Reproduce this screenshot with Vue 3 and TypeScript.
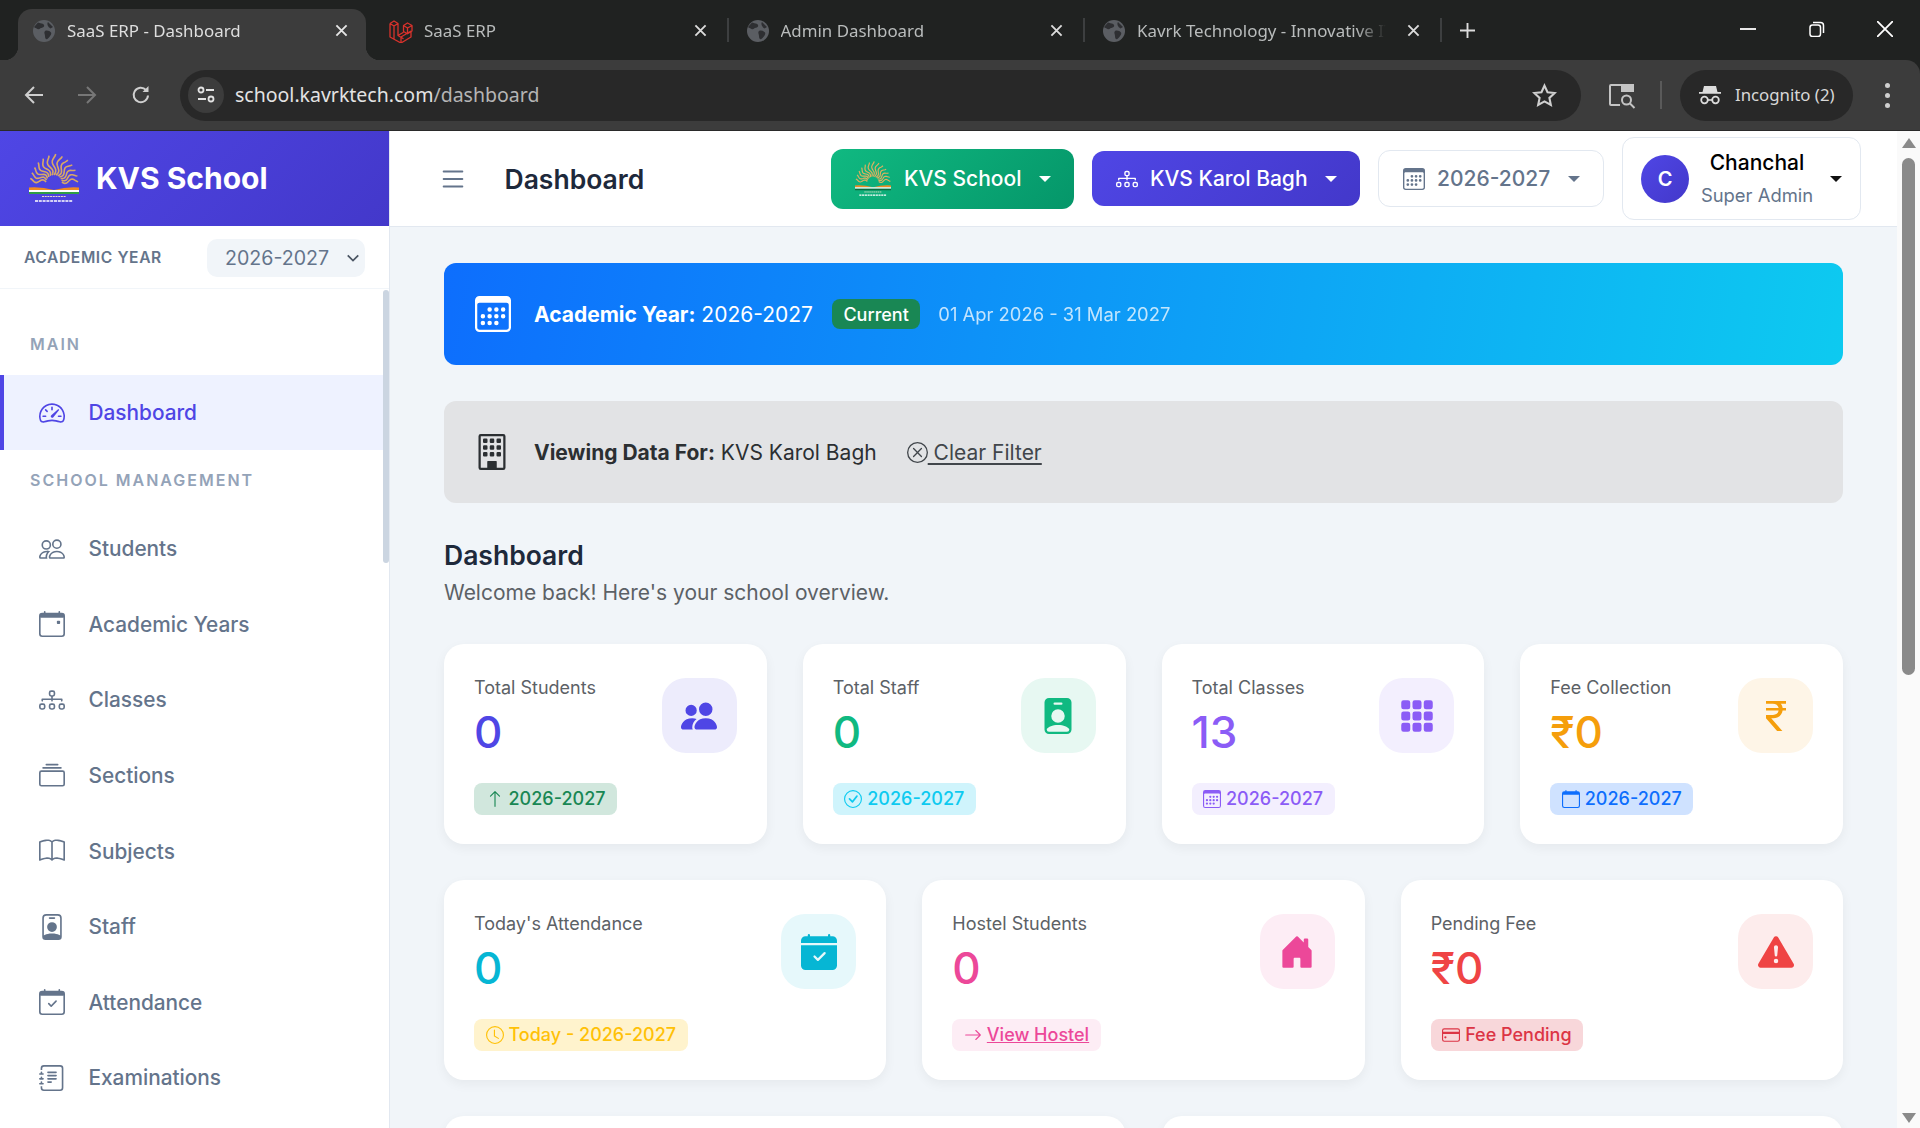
<script setup lang="ts">
import { h } from 'vue';

// bootstrap-icons paths (16x16)
const calendarOutline = 'M3.5 0a.5.5 0 0 1 .5.5V1h8V.5a.5.5 0 0 1 1 0V1h1a2 2 0 0 1 2 2v11a2 2 0 0 1-2 2H2a2 2 0 0 1-2-2V3a2 2 0 0 1 2-2h1V.5a.5.5 0 0 1 .5-.5M1 4v10a1 1 0 0 0 1 1h12a1 1 0 0 0 1-1V4z';
const icons: Record<string, string[]> = {
  speedometer: [
    'M8 4a.5.5 0 0 1 .5.5V6a.5.5 0 0 1-1 0V4.5A.5.5 0 0 1 8 4M3.732 5.732a.5.5 0 0 1 .707 0l.915.914a.5.5 0 1 1-.708.708l-.914-.915a.5.5 0 0 1 0-.707M2 10a.5.5 0 0 1 .5-.5h1.586a.5.5 0 0 1 0 1H2.5A.5.5 0 0 1 2 10m9.5 0a.5.5 0 0 1 .5-.5h1.5a.5.5 0 0 1 0 1H12a.5.5 0 0 1-.5-.5m.754-4.246a.39.39 0 0 0-.527-.02L7.547 9.31a.91.91 0 1 0 1.302 1.258l3.434-4.297a.39.39 0 0 0-.029-.518z',
    'M0 10a8 8 0 1 1 15.547 2.661c-.442 1.253-1.845 1.602-2.932 1.25C11.309 13.488 9.475 13 8 13c-1.474 0-3.31.488-4.615.911-1.087.352-2.49.003-2.932-1.25A8 8 0 0 1 0 10m8-7a7 7 0 0 0-6.603 9.329c.203.575.923.876 1.68.63C4.397 12.533 6.358 12 8 12s3.604.532 4.923.96c.757.245 1.477-.056 1.68-.631A7 7 0 0 0 8 3',
  ],
  people: ['M15 14s1 0 1-1-1-4-5-4-5 3-5 4 1 1 1 1zm-7.978-1L7 12.996c.001-.264.167-1.03.76-1.72C8.312 10.629 9.282 10 11 10c1.717 0 2.687.63 3.24 1.276.593.69.758 1.457.76 1.72l-.008.002-.014.002zM11 7a2 2 0 1 0 0-4 2 2 0 0 0 0 4m3-2a3 3 0 1 1-6 0 3 3 0 0 1 6 0M6.936 9.28a6 6 0 0 0-1.23-.247A7 7 0 0 0 5 9c-4 0-5 3-5 4q0 1 1 1h4.216A2.24 2.24 0 0 1 5 13c0-1.01.377-2.042 1.09-2.904.243-.294.526-.569.846-.816M4.92 10A5.5 5.5 0 0 0 4 13H1c0-.26.164-1.03.76-1.724.545-.636 1.492-1.256 3.16-1.275ZM1.5 5.5a3 3 0 1 1 6 0 3 3 0 0 1-6 0m3-2a2 2 0 1 0 0 4 2 2 0 0 0 0-4'],
  calendarEvent: ['M11 6.5a.5.5 0 0 1 .5-.5h1a.5.5 0 0 1 .5.5v1a.5.5 0 0 1-.5.5h-1a.5.5 0 0 1-.5-.5z', calendarOutline, 'M1 2h14v2H1z'],
  diagram: ['M6 3.5A1.5 1.5 0 0 1 7.5 2h1A1.5 1.5 0 0 1 10 3.5v1A1.5 1.5 0 0 1 8.5 6v1H14a.5.5 0 0 1 .5.5v1a.5.5 0 0 1-1 0V8h-5v.5a.5.5 0 0 1-1 0V8h-5v.5a.5.5 0 0 1-1 0v-1A.5.5 0 0 1 2 7h5.5V6A1.5 1.5 0 0 1 6 4.5zM8.5 5a.5.5 0 0 0 .5-.5v-1a.5.5 0 0 0-.5-.5h-1a.5.5 0 0 0-.5.5v1a.5.5 0 0 0 .5.5zM0 11.5A1.5 1.5 0 0 1 1.5 10h1A1.5 1.5 0 0 1 4 11.5v1A1.5 1.5 0 0 1 2.5 14h-1A1.5 1.5 0 0 1 0 12.5zm1.5-.5a.5.5 0 0 0-.5.5v1a.5.5 0 0 0 .5.5h1a.5.5 0 0 0 .5-.5v-1a.5.5 0 0 0-.5-.5zm4.5.5A1.5 1.5 0 0 1 7.5 10h1a1.5 1.5 0 0 1 1.5 1.5v1A1.5 1.5 0 0 1 8.5 14h-1A1.5 1.5 0 0 1 6 12.5zm1.5-.5a.5.5 0 0 0-.5.5v1a.5.5 0 0 0 .5.5h1a.5.5 0 0 0 .5-.5v-1a.5.5 0 0 0-.5-.5zm4.5.5a1.5 1.5 0 0 1 1.5-1.5h1a1.5 1.5 0 0 1 1.5 1.5v1a1.5 1.5 0 0 1-1.5 1.5h-1a1.5 1.5 0 0 1-1.5-1.5zm1.5-.5a.5.5 0 0 0-.5.5v1a.5.5 0 0 0 .5.5h1a.5.5 0 0 0 .5-.5v-1a.5.5 0 0 0-.5-.5z'],
  collection: ['M2.5 3.5a.5.5 0 0 1 0-1h11a.5.5 0 0 1 0 1zm2-2a.5.5 0 0 1 0-1h7a.5.5 0 0 1 0 1zM0 13a1.5 1.5 0 0 0 1.5 1.5h13A1.5 1.5 0 0 0 16 13V6a1.5 1.5 0 0 0-1.5-1.5h-13A1.5 1.5 0 0 0 0 6zm1.5.5A.5.5 0 0 1 1 13V6a.5.5 0 0 1 .5-.5h13a.5.5 0 0 1 .5.5v7a.5.5 0 0 1-.5.5z'],
  book: ['M1 2.828c.885-.37 2.154-.769 3.388-.893 1.33-.134 2.458.063 3.112.752v9.746c-.935-.53-2.12-.603-3.213-.493-1.18.12-2.37.461-3.287.811zm7.5-.141c.654-.689 1.782-.886 3.112-.752 1.234.124 2.503.523 3.388.893v9.923c-.918-.35-2.107-.692-3.287-.81-1.094-.111-2.278-.039-3.213.492zM8 1.783C7.015.936 5.587.81 4.287.94c-1.514.153-3.042.672-3.994 1.105A.5.5 0 0 0 0 2.5v11a.5.5 0 0 0 .707.455c.882-.4 2.303-.881 3.68-1.02 1.409-.142 2.59.087 3.223.877a.5.5 0 0 0 .78 0c.633-.79 1.814-1.019 3.222-.877 1.378.139 2.8.62 3.681 1.02A.5.5 0 0 0 16 13.5v-11a.5.5 0 0 0-.293-.455c-.952-.433-2.48-.952-3.994-1.105C10.413.809 8.985.936 8 1.783'],
  personBadge: ['M6.5 2a.5.5 0 0 0 0 1h3a.5.5 0 0 0 0-1zM11 8a3 3 0 1 1-6 0 3 3 0 0 1 6 0', 'M4.5 0A2.5 2.5 0 0 0 2 2.5V14a2 2 0 0 0 2 2h8a2 2 0 0 0 2-2V2.5A2.5 2.5 0 0 0 11.5 0zM3 2.5A1.5 1.5 0 0 1 4.5 1h7A1.5 1.5 0 0 1 13 2.5v10.795a4.2 4.2 0 0 0-.776-.492C11.392 12.387 10.063 12 8 12s-3.392.387-4.224.803a4.2 4.2 0 0 0-.776.492z'],
  personBadgeFill: ['M2 2a2 2 0 0 1 2-2h8a2 2 0 0 1 2 2v12a2 2 0 0 1-2 2H4a2 2 0 0 1-2-2zm4.5 0a.5.5 0 0 0 0 1h3a.5.5 0 0 0 0-1zM8 11a3 3 0 1 0 0-6 3 3 0 0 0 0 6m5 2.755C12.146 12.825 10.623 12 8 12s-4.146.826-5 1.755V14a1 1 0 0 0 1 1h8a1 1 0 0 0 1-1z'],
  calendarCheck: ['M10.854 7.146a.5.5 0 0 1 0 .708l-3 3a.5.5 0 0 1-.708 0l-1.5-1.5a.5.5 0 1 1 .708-.708L7.5 9.793l2.646-2.647a.5.5 0 0 1 .708 0', calendarOutline, 'M1 2h14v2H1z'],
  calendarCheckFill: ['M4 .5a.5.5 0 0 0-1 0V1H2a2 2 0 0 0-2 2v1h16V3a2 2 0 0 0-2-2h-1V.5a.5.5 0 0 0-1 0V1H4zM16 14V5H0v9a2 2 0 0 0 2 2h12a2 2 0 0 0 2-2m-5.146-5.146-3 3a.5.5 0 0 1-.708 0l-1.5-1.5a.5.5 0 0 1 .708-.708L7.5 10.793l2.646-2.647a.5.5 0 0 1 .708.708'],
  journal: [
    'M5 10.5a.5.5 0 0 1 .5-.5h2a.5.5 0 0 1 0 1h-2a.5.5 0 0 1-.5-.5m0-2a.5.5 0 0 1 .5-.5h5a.5.5 0 0 1 0 1h-5a.5.5 0 0 1-.5-.5m0-2a.5.5 0 0 1 .5-.5h5a.5.5 0 0 1 0 1h-5a.5.5 0 0 1-.5-.5m0-2a.5.5 0 0 1 .5-.5h5a.5.5 0 0 1 0 1h-5a.5.5 0 0 1-.5-.5',
    'M3 0h10a2 2 0 0 1 2 2v12a2 2 0 0 1-2 2H3a2 2 0 0 1-2-2v-1h1v1a1 1 0 0 0 1 1h10a1 1 0 0 0 1-1V2a1 1 0 0 0-1-1H3a1 1 0 0 0-1 1v1H1V2a2 2 0 0 1 2-2',
    'M1 5v-.5a.5.5 0 0 1 1 0V5h.5a.5.5 0 0 1 0 1h-2a.5.5 0 0 1 0-1zm0 3v-.5a.5.5 0 0 1 1 0V8h.5a.5.5 0 0 1 0 1h-2a.5.5 0 0 1 0-1zm0 3v-.5a.5.5 0 0 1 1 0v.5h.5a.5.5 0 0 1 0 1h-2a.5.5 0 0 1 0-1z',
  ],
  list: ['M2.5 12a.5.5 0 0 1 .5-.5h10a.5.5 0 0 1 0 1H3a.5.5 0 0 1-.5-.5m0-4a.5.5 0 0 1 .5-.5h10a.5.5 0 0 1 0 1H3a.5.5 0 0 1-.5-.5m0-4a.5.5 0 0 1 .5-.5h10a.5.5 0 0 1 0 1H3a.5.5 0 0 1-.5-.5'],
  calendar3: [
    'M14 0H2a2 2 0 0 0-2 2v12a2 2 0 0 0 2 2h12a2 2 0 0 0 2-2V2a2 2 0 0 0-2-2M1 3.857C1 3.384 1.448 3 2 3h12c.552 0 1 .384 1 .857v10.286c0 .473-.448.857-1 .857H2c-.552 0-1-.384-1-.857z',
    'M6.5 7a1 1 0 1 0 0-2 1 1 0 0 0 0 2m3 0a1 1 0 1 0 0-2 1 1 0 0 0 0 2m3 0a1 1 0 1 0 0-2 1 1 0 0 0 0 2m-9 3a1 1 0 1 0 0-2 1 1 0 0 0 0 2m3 0a1 1 0 1 0 0-2 1 1 0 0 0 0 2m3 0a1 1 0 1 0 0-2 1 1 0 0 0 0 2m3 0a1 1 0 1 0 0-2 1 1 0 0 0 0 2m-9 3a1 1 0 1 0 0-2 1 1 0 0 0 0 2m3 0a1 1 0 1 0 0-2 1 1 0 0 0 0 2m3 0a1 1 0 1 0 0-2 1 1 0 0 0 0 2',
  ],
  building: [
    'M4 2.5a.5.5 0 0 1 .5-.5h1a.5.5 0 0 1 .5.5v1a.5.5 0 0 1-.5.5h-1a.5.5 0 0 1-.5-.5zm3 0a.5.5 0 0 1 .5-.5h1a.5.5 0 0 1 .5.5v1a.5.5 0 0 1-.5.5h-1a.5.5 0 0 1-.5-.5zm3.5-.5a.5.5 0 0 0-.5.5v1a.5.5 0 0 0 .5.5h1a.5.5 0 0 0 .5-.5v-1a.5.5 0 0 0-.5-.5zM4 5.5a.5.5 0 0 1 .5-.5h1a.5.5 0 0 1 .5.5v1a.5.5 0 0 1-.5.5h-1a.5.5 0 0 1-.5-.5zM7.5 5a.5.5 0 0 0-.5.5v1a.5.5 0 0 0 .5.5h1a.5.5 0 0 0 .5-.5v-1a.5.5 0 0 0-.5-.5zm2.5.5a.5.5 0 0 1 .5-.5h1a.5.5 0 0 1 .5.5v1a.5.5 0 0 1-.5.5h-1a.5.5 0 0 1-.5-.5zM4.5 8a.5.5 0 0 0-.5.5v1a.5.5 0 0 0 .5.5h1a.5.5 0 0 0 .5-.5v-1a.5.5 0 0 0-.5-.5zm2.5.5a.5.5 0 0 1 .5-.5h1a.5.5 0 0 1 .5.5v1a.5.5 0 0 1-.5.5h-1a.5.5 0 0 1-.5-.5zm3.5-.5a.5.5 0 0 0-.5.5v1a.5.5 0 0 0 .5.5h1a.5.5 0 0 0 .5-.5v-1a.5.5 0 0 0-.5-.5z',
    'M2 1a1 1 0 0 1 1-1h10a1 1 0 0 1 1 1v14a1 1 0 0 1-1 1H3a1 1 0 0 1-1-1zm11 0H3v14h3v-2.5a.5.5 0 0 1 .5-.5h3a.5.5 0 0 1 .5.5V15h3z',
    'M6 12h4v3.5H6z',
  ],
  xCircle: ['M8 15A7 7 0 1 1 8 1a7 7 0 0 1 0 14m0 1A8 8 0 1 0 8 0a8 8 0 0 0 0 16', 'M4.646 4.646a.5.5 0 0 1 .708 0L8 7.293l2.646-2.647a.5.5 0 0 1 .708.708L8.707 8l2.647 2.646a.5.5 0 0 1-.708.708L8 8.707l-2.646 2.647a.5.5 0 0 1-.708-.708L7.293 8 4.646 5.354a.5.5 0 0 1 0-.708'],
  peopleFill: ['M7 14s-1 0-1-1 1-4 5-4 5 3 5 4-1 1-1 1zm4-6a3 3 0 1 0 0-6 3 3 0 0 0 0 6m-5.784 6A2.24 2.24 0 0 1 5 13c0-1.355.68-2.75 1.936-3.72A6.3 6.3 0 0 0 5 9c-4 0-5 3-5 4s1 1 1 1zM4.5 8a2.5 2.5 0 1 0 0-5 2.5 2.5 0 0 0 0 5'],
  grid: ['M1 2a1 1 0 0 1 1-1h2a1 1 0 0 1 1 1v2a1 1 0 0 1-1 1H2a1 1 0 0 1-1-1zm5 0a1 1 0 0 1 1-1h2a1 1 0 0 1 1 1v2a1 1 0 0 1-1 1H7a1 1 0 0 1-1-1zm5 0a1 1 0 0 1 1-1h2a1 1 0 0 1 1 1v2a1 1 0 0 1-1 1h-2a1 1 0 0 1-1-1zM1 7a1 1 0 0 1 1-1h2a1 1 0 0 1 1 1v2a1 1 0 0 1-1 1H2a1 1 0 0 1-1-1zm5 0a1 1 0 0 1 1-1h2a1 1 0 0 1 1 1v2a1 1 0 0 1-1 1H7a1 1 0 0 1-1-1zm5 0a1 1 0 0 1 1-1h2a1 1 0 0 1 1 1v2a1 1 0 0 1-1 1h-2a1 1 0 0 1-1-1zM1 12a1 1 0 0 1 1-1h2a1 1 0 0 1 1 1v2a1 1 0 0 1-1 1H2a1 1 0 0 1-1-1zm5 0a1 1 0 0 1 1-1h2a1 1 0 0 1 1 1v2a1 1 0 0 1-1 1H7a1 1 0 0 1-1-1zm5 0a1 1 0 0 1 1-1h2a1 1 0 0 1 1 1v2a1 1 0 0 1-1 1h-2a1 1 0 0 1-1-1z'],
  rupee: ['M4 3.06h2.726c1.22 0 2.12.575 2.325 1.724H4v1.051h5.051C8.855 7.001 8 7.558 6.788 7.558H4v1.317L8.437 14h2.11L6.095 8.884h.855c2.316-.018 3.465-1.476 3.688-3.049H12V4.784h-1.345c-.08-.778-.357-1.335-.793-1.732H12V2H4z'],
  house: ['M6.5 14.5v-3.505c0-.245.25-.495.5-.495h2c.25 0 .5.25.5.5v3.5a.5.5 0 0 0 .5.5h4a.5.5 0 0 0 .5-.5v-7a.5.5 0 0 0-.146-.354L13 5.793V2.5a.5.5 0 0 0-.5-.5h-1a.5.5 0 0 0-.5.5v1.293L8.354 1.146a.5.5 0 0 0-.708 0l-6 6A.5.5 0 0 0 1.5 7.5v7a.5.5 0 0 0 .5.5h4a.5.5 0 0 0 .5-.5'],
  warning: ['M8.982 1.566a1.13 1.13 0 0 0-1.96 0L.165 13.233c-.457.778.091 1.767.98 1.767h13.713c.889 0 1.438-.99.98-1.767zM8 5c.535 0 .954.462.9.995l-.35 3.507a.552.552 0 0 1-1.1 0L7.1 5.995A.905.905 0 0 1 8 5m.002 6a1 1 0 1 1 0 2 1 1 0 0 1 0-2'],
  arrowUp: ['M8 15a.5.5 0 0 0 .5-.5V2.707l3.146 3.147a.5.5 0 0 0 .708-.708l-4-4a.5.5 0 0 0-.708 0l-4 4a.5.5 0 1 0 .708.708L7.5 2.707V14.5a.5.5 0 0 0 .5.5'],
  checkCircle: ['M8 15A7 7 0 1 1 8 1a7 7 0 0 1 0 14m0 1A8 8 0 1 0 8 0a8 8 0 0 0 0 16', 'm10.97 4.97-.02.022-3.473 4.425-2.093-2.094a.75.75 0 0 0-1.06 1.06L6.97 11.03a.75.75 0 0 0 1.079-.02l3.992-4.99a.75.75 0 0 0-1.071-1.05'],
  calendar: [calendarOutline, 'M1 2h14v2H1z'],
  clock: ['M8 3.5a.5.5 0 0 0-1 0V9a.5.5 0 0 0 .252.434l3.5 2a.5.5 0 0 0 .496-.868L8 8.71z', 'M8 16A8 8 0 1 0 8 0a8 8 0 0 0 0 16m7-8A7 7 0 1 1 1 8a7 7 0 0 1 14 0'],
  arrowRight: ['M1 8a.5.5 0 0 1 .5-.5h11.793l-3.147-3.146a.5.5 0 0 1 .708-.708l4 4a.5.5 0 0 1 0 .708l-4 4a.5.5 0 0 1-.708-.708L13.293 8.5H1.5A.5.5 0 0 1 1 8'],
  card: ['M0 4a2 2 0 0 1 2-2h12a2 2 0 0 1 2 2v8a2 2 0 0 1-2 2H2a2 2 0 0 1-2-2zm2-1a1 1 0 0 0-1 1v1h14V4a1 1 0 0 0-1-1zm13 4H1v5a1 1 0 0 0 1 1h12a1 1 0 0 0 1-1z', 'M2 10a1 1 0 0 1 1-1 1 1 0 0 1 1 1 1 1 0 0 1-1 1 1 1 0 0 1-1-1'],
};

// 16x16 icon as a tiny functional component
const Bi = (props: { name: string }) =>
  h('svg', { class: 'bi', viewBox: '0 0 16 16', fill: 'currentColor' },
    icons[props.name].map((d) => h('path', { d, 'fill-rule': 'evenodd' })));
Bi.props = ['name'];

// wavy sun rays of the school emblem
const rays = Array.from({ length: 13 }, (_, i) => {
  const a = Math.PI + (Math.PI * (i + 0.5)) / 13;
  const cx = 25;
  const cy = 32;
  const side = Math.abs(Math.cos(a));
  const inner = 8;
  const outer = 29 - side * 5;
  const pts: string[] = [];
  for (let s = 0; s <= 12; s++) {
    const r = inner + ((outer - inner) * s) / 12;
    const off = Math.sin((s / 12) * Math.PI * 2.4) * 1.8;
    const x = cx + Math.cos(a) * r - Math.sin(a) * off;
    const y = cy + Math.sin(a) * r + Math.cos(a) * off;
    pts.push(`${x.toFixed(1)} ${y.toFixed(1)}`);
  }
  return 'M' + pts.join('L');
});

const tabs = [
  { title: 'SaaS ERP', icon: 'laravel' },
  { title: 'Admin Dashboard', icon: 'globe' },
  { title: 'Kavrk Technology - Innovative IT Solutions', icon: 'globe' },
];

const mainNav = ['Dashboard'];
const schoolNav = [
  { label: 'Students', icon: 'people' },
  { label: 'Academic Years', icon: 'calendarEvent' },
  { label: 'Classes', icon: 'diagram' },
  { label: 'Sections', icon: 'collection' },
  { label: 'Subjects', icon: 'book' },
  { label: 'Staff', icon: 'personBadge' },
  { label: 'Attendance', icon: 'calendarCheck' },
  { label: 'Examinations', icon: 'journal' },
];

const topStats = [
  { label: 'Total Students', value: '0', icon: 'peopleFill', tone: 'indigo', badge: '2026-2027', badgeIcon: 'arrowUp', badgeTone: 'b-green' },
  { label: 'Total Staff', value: '0', icon: 'personBadgeFill', tone: 'green', badge: '2026-2027', badgeIcon: 'checkCircle', badgeTone: 'b-cyan' },
  { label: 'Total Classes', value: '13', icon: 'grid', tone: 'violet', badge: '2026-2027', badgeIcon: 'calendar3', badgeTone: 'b-violet' },
  { label: 'Fee Collection', value: '₹0', icon: 'rupee', tone: 'amber', badge: '2026-2027', badgeIcon: 'calendar', badgeTone: 'b-blue' },
];
const midStats = [
  { label: "Today's Attendance", value: '0', icon: 'calendarCheckFill', tone: 'cyan', badge: 'Today - 2026-2027', badgeIcon: 'clock', badgeTone: 'b-yellow' },
  { label: 'Hostel Students', value: '0', icon: 'house', tone: 'pink', badge: 'View Hostel', badgeIcon: 'arrowRight', badgeTone: 'b-pink', link: true },
  { label: 'Pending Fee', value: '₹0', icon: 'warning', tone: 'red', badge: 'Fee Pending', badgeIcon: 'card', badgeTone: 'b-red' },
];
</script>

<template>
  <div class="app">
    <!-- browser chrome -->
    <div class="chrome">
      <div class="tabstrip">
        <div class="tab active">
          <svg class="favicon" viewBox="0 0 24 24"><circle cx="12" cy="12" r="11" fill="#5b5e63" /><path d="M6 3.5c2 1 5 .5 6 2.5s-2 3-3 3-1.5 2-3.5 1S2 8 2 8zM13 12c2-1 5 0 6 1.5s-1 4-3 6-3-.5-3-2.5-1.5-3.5 0-5zM16 3l5 5-2.5 1.5C16 8 14.5 5 16 3z" fill="#2e2f32" /></svg>
          <span class="tab-title">SaaS ERP - Dashboard</span>
          <svg class="tab-close" viewBox="0 0 14 14"><path d="M1.5 1.5l11 11M12.5 1.5l-11 11" stroke="#e6e6e6" stroke-width="2" /></svg>
        </div>
        <div v-for="tab in tabs" :key="tab.title" class="tab">
          <svg v-if="tab.icon === 'laravel'" class="favicon" viewBox="0 0 24 24" fill="none" stroke="#d9322c" stroke-width="1.3" stroke-linejoin="round"><path d="M1 4.5L5 2l4 2.5v12l5.5 3.3M1 4.5V18l11 6 10-6v-6M1 4.5L5 7l4-2.5M5 7v13.5M12 24v-6l10-6M14.5 6.5l4-2.5 4.500 2.500V12l-4.500 2.800-4-2.300zM18.500 9v6M14.500 6.500l4 2.500 4.500-2.500M9 16.500l5.500-3.300" /></svg>
          <svg v-else class="favicon" viewBox="0 0 24 24"><circle cx="12" cy="12" r="11" fill="#5b5e63" /><path d="M6 3.5c2 1 5 .5 6 2.5s-2 3-3 3-1.5 2-3.5 1S2 8 2 8zM13 12c2-1 5 0 6 1.5s-1 4-3 6-3-.5-3-2.5-1.5-3.5 0-5zM16 3l5 5-2.5 1.5C16 8 14.500 5 16 3z" fill="#2e2f32" /></svg>
          <span class="tab-title">{{ tab.title }}</span>
          <svg class="tab-close" viewBox="0 0 14 14"><path d="M1.5 1.5l11 11M12.5 1.5l-11 11" stroke="#dcdcdc" stroke-width="2" /></svg>
        </div>
        <svg class="new-tab" viewBox="0 0 16 16"><path d="M8 0v16M0 8h16" stroke="#dcdcdc" stroke-width="2" /></svg>
        <div class="window-btns">
          <svg viewBox="0 0 16 16"><path d="M0 8h16" stroke="#fff" stroke-width="1.8" /></svg>
          <svg viewBox="0 0 16 16" fill="none" stroke="#fff" stroke-width="1.5"><rect x="1" y="4" width="10.5" height="11.5" rx="2.5" /><path d="M4 1.5h7.5a3 3 0 0 1 3 3V12" /></svg>
          <svg viewBox="0 0 16 16"><path d="M0 0l16 16M16 0L0 16" stroke="#fff" stroke-width="1.8" /></svg>
        </div>
      </div>
      <div class="toolbar">
        <div class="tool">
          <svg viewBox="0 0 20 20" fill="none" stroke="#cfcfcf" stroke-width="2"><path d="M19 10H2M10 2l-8 8 8 8" /></svg>
        </div>
        <div class="tool">
          <svg viewBox="0 0 20 20" fill="none" stroke="#777" stroke-width="2"><path d="M1 10h17M10 2l8 8-8 8" /></svg>
        </div>
        <div class="tool">
          <svg viewBox="0 0 20 20" fill="none" stroke="#cfcfcf" stroke-width="2"><path d="M17 10.5a7.2 7.2 0 1 1-2-5.500" /><path d="M17.5 1v6h-6" fill="#cfcfcf" stroke="none" /></svg>
        </div>
        <div class="urlbar">
          <div class="site-info">
            <svg viewBox="0 0 20 20" fill="none" stroke="#e3e3e3" stroke-width="1.8"><circle cx="5" cy="5" r="2.5" /><path d="M10 5h8M2 14h8" /><circle cx="15" cy="14" r="2.5" /></svg>
          </div>
          <span class="url">school.kavrktech.com<span class="url-path">/dashboard</span></span>
          <svg class="star" viewBox="0 0 24 24" fill="none" stroke="#cfcfcf" stroke-width="2"><path d="M12 2.5l2.900 6.300 6.900.8-5.100 4.700 1.400 6.800-6.100-3.400-6.100 3.400 1.400-6.800-5.100-4.700 6.900-.8z" /></svg>
        </div>
        <svg class="tab-search" viewBox="0 0 28 28" fill="none" stroke="#c4c4c4" stroke-width="2"><path d="M12 24H3a1 1 0 0 1-1-1V5a1 1 0 0 1 1-1h21a1 1 0 0 1 1 1v6" /><path d="M14 4h11v6H14z" fill="#c4c4c4" /><circle cx="18.5" cy="19" r="4.5" /><path d="M22 22.500l4.500 4.500" /></svg>
        <span class="tool-sep"></span>
        <div class="incognito">
          <svg viewBox="0 0 22 22" fill="#dcdcdc"><path d="M5 3h12l1.500 6H22v1.800H0V9h3.500z" /><circle cx="5.500" cy="17" r="3.300" fill="none" stroke="#dcdcdc" stroke-width="1.8" /><circle cx="16.500" cy="17" r="3.300" fill="none" stroke="#dcdcdc" stroke-width="1.8" /><path d="M8.800 16.200h4.400v1.600H8.800z" /></svg>
          <span>Incognito (2)</span>
        </div>
        <div class="dots"><i></i><i></i><i></i></div>
      </div>
    </div>

    <div class="page">
      <!-- sidebar -->
      <aside class="sidebar">
        <div class="brand">
          <svg class="emblem brand-logo" viewBox="0 0 50 55">
            <path v-for="d in rays" :key="d" :d="d" fill="none" stroke="#d9a866" stroke-width="1.6" />
            <path d="M0 36.5q12-1 25 2.5 13-3.5 25-2.500V39H0z" fill="#f08a24" />
            <path d="M0 39h50v2H0z" fill="#fff" />
            <path d="M0 41h50v2H0z" fill="#2f9e44" />
            <path d="M13 45.5h24" stroke="#e8d9c8" stroke-width="1.2" stroke-dasharray="2 .7" />
            <path d="M6 50h38" stroke="#fff" stroke-width="1.6" stroke-dasharray="3 .8" />
          </svg>
          <span class="brand-name">KVS School</span>
        </div>
        <div class="year-row">
          <span class="year-label">ACADEMIC YEAR</span>
          <div class="year-select">
            <span>2026-2027</span>
            <svg viewBox="0 0 16 16" fill="none" stroke="#4b5563" stroke-width="2"><path d="M2 5l6 6 6-6" /></svg>
          </div>
        </div>
        <nav class="nav">
          <div class="nav-label first">MAIN</div>
          <a v-for="item in mainNav" :key="item" class="nav-item active">
            <Bi name="speedometer" />
            <span>{{ item }}</span>
          </a>
          <div class="nav-label">SCHOOL MANAGEMENT</div>
          <a v-for="item in schoolNav" :key="item.label" class="nav-item">
            <Bi :name="item.icon" />
            <span>{{ item.label }}</span>
          </a>
        </nav>
        <div class="side-thumb"></div>
      </aside>

      <!-- main column -->
      <div class="main">
        <header class="topbar">
          <Bi name="list" class="burger" />
          <h1 class="top-title">Dashboard</h1>
          <div class="top-actions">
            <button class="btn btn-green">
              <svg class="emblem btn-logo" viewBox="0 0 50 55">
                <path v-for="d in rays" :key="d" :d="d" fill="none" stroke="#e0b060" stroke-width="1.6" />
                <path d="M0 36.5q12-1 25 2.5 13-3.5 25-2.500V39H0z" fill="#f08a24" />
                <path d="M0 39h50v2H0z" fill="#fff" />
                <path d="M0 41h50v2H0z" fill="#0c6b3e" />
                <path d="M13 45.5h24" stroke="#e8e0c8" stroke-width="1.2" stroke-dasharray="2 .7" />
                <path d="M6 50h38" stroke="#fff" stroke-width="1.6" stroke-dasharray="3 .8" />
              </svg>
              <span>KVS School</span>
              <i class="caret"></i>
            </button>
            <button class="btn btn-indigo">
              <Bi name="diagram" />
              <span>KVS Karol Bagh</span>
              <i class="caret"></i>
            </button>
            <button class="btn btn-year">
              <Bi name="calendar3" />
              <span>2026-2027</span>
              <i class="caret"></i>
            </button>
            <button class="btn btn-user">
              <span class="avatar">C</span>
              <span class="user-text">
                <span class="user-name">Chanchal</span>
                <span class="user-role">Super Admin</span>
              </span>
              <i class="caret"></i>
            </button>
          </div>
        </header>

        <main class="content">
          <div class="banner">
            <Bi name="calendar3" class="banner-icon" />
            <span class="banner-text"><strong>Academic Year:</strong> 2026-2027</span>
            <span class="banner-pill">Current</span>
            <span class="banner-range">01 Apr 2026 - 31 Mar 2027</span>
          </div>

          <div class="filter">
            <Bi name="building" class="filter-icon" />
            <span class="filter-text"><strong>Viewing Data For:</strong> KVS Karol Bagh</span>
            <a class="clear-link"><Bi name="xCircle" /><span> Clear Filter</span></a>
          </div>

          <h2 class="page-title">Dashboard</h2>
          <p class="page-sub">Welcome back! Here's your school overview.</p>

          <div class="grid grid-4">
            <div v-for="s in topStats" :key="s.label" class="stat" :class="s.tone">
              <div class="stat-top">
                <div>
                  <div class="stat-label">{{ s.label }}</div>
                  <div class="stat-value">{{ s.value }}</div>
                </div>
                <div class="stat-icon"><Bi :name="s.icon" /></div>
              </div>
              <span class="badge" :class="s.badgeTone"><Bi :name="s.badgeIcon" />{{ s.badge }}</span>
            </div>
          </div>

          <div class="grid grid-3">
            <div v-for="s in midStats" :key="s.label" class="stat" :class="s.tone">
              <div class="stat-top">
                <div>
                  <div class="stat-label">{{ s.label }}</div>
                  <div class="stat-value">{{ s.value }}</div>
                </div>
                <div class="stat-icon"><Bi :name="s.icon" /></div>
              </div>
              <span class="badge" :class="[s.badgeTone, { 'badge-link': s.link }]"><Bi :name="s.badgeIcon" /><span class="badge-text">{{ s.badge }}</span></span>
            </div>
          </div>

          <div class="grid grid-2">
            <div class="panel"></div>
            <div class="panel"></div>
          </div>
        </main>
      </div>

      <!-- page scrollbar -->
      <div class="scrollbar">
        <i class="arrow up"></i>
        <div class="thumb"></div>
        <i class="arrow down"></i>
      </div>
    </div>
  </div>
</template>

<style>
html, body {
  margin: 0;
  overflow: hidden;
}
</style>

<style scoped>
.app {
  height: 100vh;
  display: flex;
  flex-direction: column;
  overflow: hidden;
  font-family: Inter, "Liberation Sans", sans-serif;
  background: #f1f5f9;
}
.bi {
  display: block;
  flex: none;
}

/* browser chrome */
.chrome {
  background: #202221;
  flex: none;
  font-family: "Noto Sans", "Open Sans", sans-serif;
}
.tabstrip {
  height: 60px;
  display: flex;
  align-items: flex-end;
  padding-left: 18px;
}
.tab {
  position: relative;
  width: 356.5px;
  height: 51px;
  box-sizing: border-box;
  display: flex;
  align-items: center;
  padding: 0 22px 8px 17px;
  color: #b9bcbc;
}
.tab::after {
  content: "";
  position: absolute;
  right: 0;
  top: 9px;
  height: 24px;
  width: 2px;
  background: #3d3f40;
}
.tab:nth-child(2) {
  margin-left: 6px;
}
.tab.active {
  width: 348px;
  background: #3c3c3c;
  border-radius: 14px 14px 0 0;
  padding: 0 18px 8px 14px;
  color: #dedede;
}
.tab.active::before,
.tab.active::after {
  content: "";
  position: absolute;
  top: auto;
  bottom: 0;
  width: 14px;
  height: 14px;
}
.tab.active::before {
  left: -14px;
  background: radial-gradient(circle at 0 0, transparent 14px, #3c3c3c 14.5px);
}
.tab.active::after {
  right: -14px;
  background: radial-gradient(circle at 100% 0, transparent 14px, #3c3c3c 14.5px);
}
.favicon {
  width: 24px;
  height: 24px;
  flex: none;
}
.tab-title {
  flex: 1;
  margin-left: 11px;
  font-size: 16.9px;
  white-space: nowrap;
  overflow: hidden;
  -webkit-mask-image: linear-gradient(to right, #000 calc(100% - 30px), transparent);
  mask-image: linear-gradient(to right, #000 calc(100% - 30px), transparent);
}
.tab-close {
  width: 13px;
  height: 13px;
  flex: none;
  margin-left: 21px;
}
.new-tab {
  width: 15px;
  height: 15px;
  margin: 0 0 22px 18px;
  flex: none;
}
.window-btns {
  margin-left: auto;
  height: 60px;
  box-sizing: border-box;
  display: flex;
  align-items: flex-start;
  gap: 52.5px;
  padding: 21px 27px 0 0;
}
.window-btns svg {
  width: 16px;
  height: 16px;
}
.toolbar {
  height: 70px;
  background: #3c3c3c;
  border-top-right-radius: 14px;
  border-bottom: 1px solid #2a2a2a;
  display: flex;
  align-items: center;
  padding: 0 30.5px 0 7px;
}
.tool {
  width: 53.5px;
  display: flex;
  justify-content: center;
}
.tool svg {
  width: 20px;
  height: 20px;
}
.urlbar {
  flex: 1;
  height: 51px;
  margin-left: 12.5px;
  background: #282828;
  border-radius: 26px;
  display: flex;
  align-items: center;
  padding: 0 24px 0 8px;
}
.site-info {
  width: 36px;
  height: 36px;
  border-radius: 50%;
  background: #3c3c3c;
  display: flex;
  align-items: center;
  justify-content: center;
}
.site-info svg {
  width: 20px;
  height: 20px;
}
.url {
  margin-left: 11px;
  padding-bottom: 2px;
  font-size: 19.5px;
  color: #e3e3e3;
}
.url-path {
  color: #b5b5b5;
}
.star {
  width: 25px;
  height: 25px;
  margin-left: auto;
}
.tab-search {
  width: 28px;
  height: 28px;
  margin-left: 27px;
}
.tool-sep {
  width: 2px;
  height: 28px;
  background: #5a5a5a;
  margin-left: 24px;
}
.incognito {
  width: 173px;
  height: 51px;
  box-sizing: border-box;
  margin-left: 18px;
  background: #282828;
  border-radius: 26px;
  display: flex;
  align-items: center;
  padding: 0 0 2px 19px;
  gap: 14px;
  color: #d8d8d8;
  font-size: 16.8px;
}
.incognito svg {
  width: 22px;
  height: 22px;
}
.dots {
  margin-left: 31.5px;
  display: flex;
  flex-direction: column;
  gap: 5px;
}
.dots i {
  display: block;
  width: 5px;
  height: 5px;
  border-radius: 50%;
  background: #cfcfcf;
}

.page {
  flex: 1;
  min-height: 0;
  display: flex;
}

/* sidebar */
.sidebar {
  position: relative;
  width: 390px;
  flex: none;
  box-sizing: border-box;
  background: #fff;
  border-right: 1px solid #e2e8f0;
  overflow: hidden;
}
.brand {
  height: 95px;
  display: flex;
  align-items: center;
  padding-left: 29px;
  gap: 17px;
  background: linear-gradient(135deg, #4f46e5, #4338ca);
}
.brand-logo {
  width: 50px;
  height: 55px;
}
.brand-name {
  padding-bottom: 1px;
  color: #fff;
  font-size: 30px;
  font-weight: 700;
}
.year-row {
  height: 63px;
  box-sizing: border-box;
  border-bottom: 1px solid #f1f5f9;
  display: flex;
  align-items: center;
  justify-content: space-between;
  padding: 1px 24px 0;
}
.year-label {
  font-size: 15.6px;
  font-weight: 600;
  letter-spacing: 0.6px;
  color: #64748b;
}
.year-select {
  width: 158px;
  height: 38px;
  box-sizing: border-box;
  background: #f1f5f9;
  border-radius: 10px;
  display: flex;
  align-items: center;
  justify-content: space-between;
  padding: 0 5px 0 18px;
  font-size: 19.6px;
  color: #64748b;
}
.year-select svg {
  width: 14px;
  height: 14px;
}
.nav-label {
  padding: 20px 30px 21px;
  font-size: 16px;
  line-height: 20px;
  font-weight: 600;
  letter-spacing: 2px;
  color: #94a3b8;
}
.nav-label.first {
  margin-top: 25px;
}
.nav-item {
  height: 75.6px;
  box-sizing: border-box;
  display: flex;
  align-items: center;
  gap: 23.5px;
  padding-left: 39px;
  color: #64748b;
  font-size: 20.8px;
  font-weight: 500;
}
.nav-item .bi {
  width: 26px;
  height: 26px;
}
.nav-item.active {
  height: 75px;
  margin-right: 6px;
  background: #eef2ff;
  color: #4f46e5;
  border-left: 4px solid #4f46e5;
  padding-left: 35px;
}
.side-thumb {
  position: absolute;
  top: 159px;
  right: 0;
  width: 6px;
  height: 273px;
  background: #cbd5e1;
  border-radius: 3px;
}

/* main */
.main {
  flex: 1;
  min-width: 0;
  display: flex;
  flex-direction: column;
}
.topbar {
  height: 96px;
  flex: none;
  box-sizing: border-box;
  background: #fff;
  border-bottom: 1px solid #e2e8f0;
  display: flex;
  align-items: center;
  padding: 0 36px 0 48px;
}
.burger {
  width: 30px;
  height: 30px;
  color: #64748b;
}
.top-title {
  margin: 0 0 0 36.5px;
  font-size: 26.5px;
  font-weight: 600;
  color: #1e293b;
}
.top-actions {
  margin-left: auto;
  display: flex;
  align-items: center;
  gap: 18px;
}
.btn {
  display: flex;
  align-items: center;
  box-sizing: border-box;
  border: none;
  font-family: inherit;
  font-size: 21px;
  font-weight: 500;
  color: #fff;
  border-radius: 12px;
  padding: 0;
}
.caret {
  display: block;
  width: 0;
  height: 0;
  border-top: 6.5px solid currentColor;
  border-left: 6.5px solid transparent;
  border-right: 6.5px solid transparent;
}
.btn-green {
  height: 60px;
  width: 243px;
  padding-left: 24px;
  background: linear-gradient(135deg, #10b981, #059669);
}
.btn-logo {
  width: 36px;
  height: 40px;
}
.btn-green span {
  margin: 0 18px 0 13px;
}
.btn-indigo {
  height: 55px;
  width: 268px;
  padding-left: 24px;
  background: linear-gradient(135deg, #4f46e5, #4338ca);
}
.btn-indigo .bi {
  width: 22px;
  height: 22px;
}
.btn-indigo span {
  margin: 0 17px 0 12px;
}
.btn-year {
  height: 57px;
  width: 226px;
  padding-left: 24px;
  background: #fff;
  color: #64748b;
  border: 1px solid #e2e8f0;
}
.btn-year .bi {
  width: 22px;
  height: 22px;
}
.btn-year span {
  margin: 0 18px 0 12px;
}
.btn-user {
  height: 83px;
  width: 239px;
  padding-left: 18px;
  background: #fff;
  color: #111;
  border: 1px solid #e2e8f0;
}
.avatar {
  width: 48px;
  height: 48px;
  border-radius: 50%;
  background: linear-gradient(135deg, #4f46e5, #4338ca);
  color: #fff;
  font-size: 20px;
  font-weight: 600;
  display: flex;
  align-items: center;
  justify-content: center;
  flex: none;
}
.user-text {
  width: 112px;
  margin: 0 17px 0 12px;
  display: flex;
  flex-direction: column;
  align-items: center;
  gap: 9px;
  white-space: nowrap;
}
.user-name {
  font-size: 21px;
  line-height: 24px;
  color: #000;
}
.user-role {
  font-size: 18.4px;
  line-height: 22px;
  font-weight: 400;
  color: #64748b;
}

/* content */
.content {
  flex: 1;
  min-height: 0;
  overflow: hidden;
  padding: 36px 54px 0;
}
.banner,
.filter {
  height: 102px;
  box-sizing: border-box;
  border-radius: 12px;
  display: flex;
  align-items: center;
  margin-bottom: 36px;
}
.banner {
  padding-left: 31px;
  color: #fff;
  background: linear-gradient(100deg, #0d6efd, #0dcaf0);
}
.banner-icon {
  width: 36px;
  height: 36px;
}
.banner-text {
  margin-left: 23px;
  font-size: 21px;
}
.banner-text strong,
.filter-text strong {
  font-weight: 650;
}
.banner-pill {
  margin-left: 19px;
  height: 30px;
  padding: 0 11.5px;
  display: flex;
  align-items: center;
  border-radius: 8px;
  background: #198754;
  font-size: 18px;
  font-weight: 500;
}
.banner-range {
  margin-left: 18px;
  font-size: 18.4px;
  opacity: 0.75;
}
.filter {
  padding-left: 30px;
  margin-bottom: 0;
  background: #e2e3e5;
  color: #2b2f32;
}
.filter-icon {
  width: 36px;
  height: 36px;
}
.filter-text {
  margin-left: 24px;
  font-size: 21px;
}
.clear-link {
  margin-left: 30px;
  display: flex;
  align-items: center;
  font-size: 21px;
  color: #41464b;
  text-decoration: underline;
  text-underline-offset: 3px;
}
.clear-link .bi {
  width: 21px;
  height: 21px;
}
.clear-link span {
  white-space: pre;
}
.page-title {
  margin: 36px 0 0;
  font-size: 26.5px;
  line-height: 32px;
  font-weight: 600;
  color: #1e293b;
}
.page-sub {
  margin: 8px 0 0;
  font-size: 21px;
  line-height: 28px;
  color: #5c6166;
}

.grid {
  display: grid;
  gap: 36px;
  margin-top: 36px;
}
.page-sub + .grid {
  margin-top: 37px;
}
.grid-4 {
  grid-template-columns: repeat(4, 1fr);
}
.grid-3 {
  grid-template-columns: repeat(3, 1fr);
}
.grid-2 {
  grid-template-columns: repeat(2, 1fr);
}
.stat {
  height: 200px;
  box-sizing: border-box;
  background: #fff;
  border-radius: 20px;
  box-shadow: 0 4px 12px rgba(0, 0, 0, 0.05);
  padding: 30px;
}
.panel {
  height: 300px;
  background: #fff;
  border-radius: 20px;
  box-shadow: 0 4px 12px rgba(0, 0, 0, 0.05);
}
.stat-top {
  display: flex;
  justify-content: space-between;
  align-items: flex-start;
}
.stat-label {
  padding-top: 1px;
  font-size: 18px;
  line-height: 26px;
  color: #5c6166;
}
.stat-value {
  margin-top: 5px;
  font-size: 44px;
  font-weight: 450;
  line-height: 52px;
  color: var(--tone);
}
.stat-icon {
  margin-top: 4px;
  width: 75px;
  height: 75px;
  border-radius: 24px;
  background: var(--tone-bg);
  color: var(--tone);
  display: flex;
  align-items: center;
  justify-content: center;
}
.stat-icon .bi {
  width: 36px;
  height: 36px;
}
.amber .stat-icon .bi {
  width: 40px;
  height: 40px;
}
.indigo { --tone: #4f46e5; --tone-bg: #edecfc; }
.green { --tone: #10b981; --tone-bg: #e7f8f2; }
.violet { --tone: #8b5cf6; --tone-bg: #f3effe; }
.amber { --tone: #f59e0b; --tone-bg: #fef5e7; }
.cyan { --tone: #06b6d4; --tone-bg: #e6f8fb; }
.pink { --tone: #ec4899; --tone-bg: #fdedf5; }
.red { --tone: #ef4444; --tone-bg: #fdecec; }

.badge {
  display: inline-flex;
  align-items: center;
  gap: 5px;
  height: 31.5px;
  margin-top: 25px;
  padding: 0 11.5px;
  border-radius: 8px;
  font-size: 18px;
  font-weight: 500;
}
.badge .bi {
  width: 18px;
  height: 18px;
}
.b-green { background: #d1e7dd; color: #198754; }
.b-cyan { background: #cff4fc; color: #0dcaf0; }
.b-violet { background: #f3effe; color: #8b5cf6; }
.b-blue { background: #cfe2ff; color: #0d6efd; }
.b-yellow { background: #fff3cd; color: #ffc107; }
.b-pink { background: #fdedf5; color: #ec4899; }
.b-red { background: #f8d7da; color: #dc3545; }
.badge-link .badge-text {
  text-decoration: underline;
}

/* page scrollbar */
.scrollbar {
  width: 23px;
  flex: none;
  background: #fafafa;
  display: flex;
  flex-direction: column;
  align-items: center;
  padding-top: 7px;
  box-sizing: border-box;
}
.thumb {
  width: 13px;
  height: 517px;
  margin-top: 10px;
  border-radius: 7px;
  background: #8a8a8a;
}
.arrow {
  display: block;
  width: 0;
  height: 0;
  border-left: 7px solid transparent;
  border-right: 7px solid transparent;
}
.arrow.up {
  border-bottom: 10px solid #8a8a8a;
}
.arrow.down {
  border-top: 10px solid #8a8a8a;
  margin-top: auto;
  margin-bottom: 5px;
}
</style>
